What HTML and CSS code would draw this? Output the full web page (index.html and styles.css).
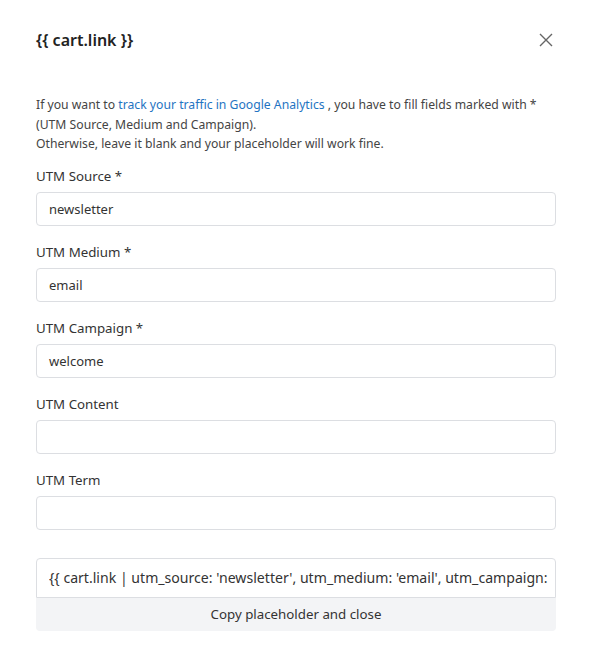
FILE: index.html
```html
<!DOCTYPE html>
<html>
<head>
<meta charset="utf-8">
<link rel="stylesheet" href="styles.css">
</head>
<body>
<div class="modal">
  <div class="header">
    <h2 class="title">{{ cart.link }}</h2>
    <button class="close" aria-label="Close">
      <svg width="14" height="14" viewBox="0 0 14 14"><path d="M1 1L13 13M13 1L1 13" stroke="#666" stroke-width="1.4" fill="none"/></svg>
    </button>
  </div>
  <p class="intro">If you want to <a href="#">track your traffic in Google Analytics</a> , you have to fill fields marked with * (UTM Source, Medium and Campaign).<br>Otherwise, leave it blank and your placeholder will work fine.</p>
  <div class="field">
    <label>UTM Source *</label>
    <div class="input">newsletter</div>
  </div>
  <div class="field">
    <label>UTM Medium *</label>
    <div class="input">email</div>
  </div>
  <div class="field">
    <label>UTM Campaign *</label>
    <div class="input">welcome</div>
  </div>
  <div class="field">
    <label>UTM Content</label>
    <div class="input"></div>
  </div>
  <div class="field">
    <label>UTM Term</label>
    <div class="input"></div>
  </div>
  <div class="result">
    <div class="output"><span class="output-text">{{ cart.link | utm_source: 'newsletter', utm_medium: 'email', utm_campaign:</span></div>
    <button class="copy">Copy placeholder and close</button>
  </div>
</div>
</body>
</html>
```
FILE: styles.css
```css
html, body {
  margin: 0;
  padding: 0;
  background: #fff;
}
body {
  font-family: "Noto Sans", "Open Sans", sans-serif;
  color: #333;
}
.modal {
  width: 591px;
  padding: 0 35px 0 36px;
  box-sizing: border-box;
}
.header {
  display: flex;
  justify-content: space-between;
  align-items: center;
  height: 80px;
}
.title {
  margin: 0;
  font-size: 16px;
  font-weight: 600;
  color: #222;
}
.close {
  border: 0;
  background: none;
  padding: 0;
  margin-right: 3px;
  width: 14px;
  height: 14px;
  display: flex;
}
.intro {
  margin: 15px 0 0;
  font-size: 12.2px;
  line-height: 19.5px;
  color: #444;
}
.intro a {
  color: #1f74c2;
  text-decoration: none;
}
.field {
  display: flex;
  flex-direction: column;
  margin-top: 12px;
}
.field + .field {
  margin-top: 16px;
}
.field label {
  font-size: 13.3px;
  line-height: 20px;
  color: #333;
  margin-bottom: 6px;
}
.input {
  height: 34px;
  box-sizing: border-box;
  border: 1px solid #dcdee2;
  border-radius: 4px;
  padding: 0 12px;
  font-size: 13px;
  line-height: 32px;
  color: #333;
}
.result {
  margin-top: 28px;
}
.output {
  height: 40px;
  box-sizing: border-box;
  border: 1px solid #dcdee2;
  border-radius: 4px 4px 0 0;
  padding: 0 1px 0 12px;
  font-size: 14.1px;
  line-height: 38px;
  white-space: nowrap;
  color: #333;
  display: flex;
}
.output-text {
  overflow: hidden;
}
.copy {
  display: block;
  width: 100%;
  height: 33px;
  border: 0;
  border-radius: 0 0 4px 4px;
  background: #f3f4f6;
  font-family: inherit;
  font-size: 13.3px;
  color: #333;
  padding: 0;
}
```
